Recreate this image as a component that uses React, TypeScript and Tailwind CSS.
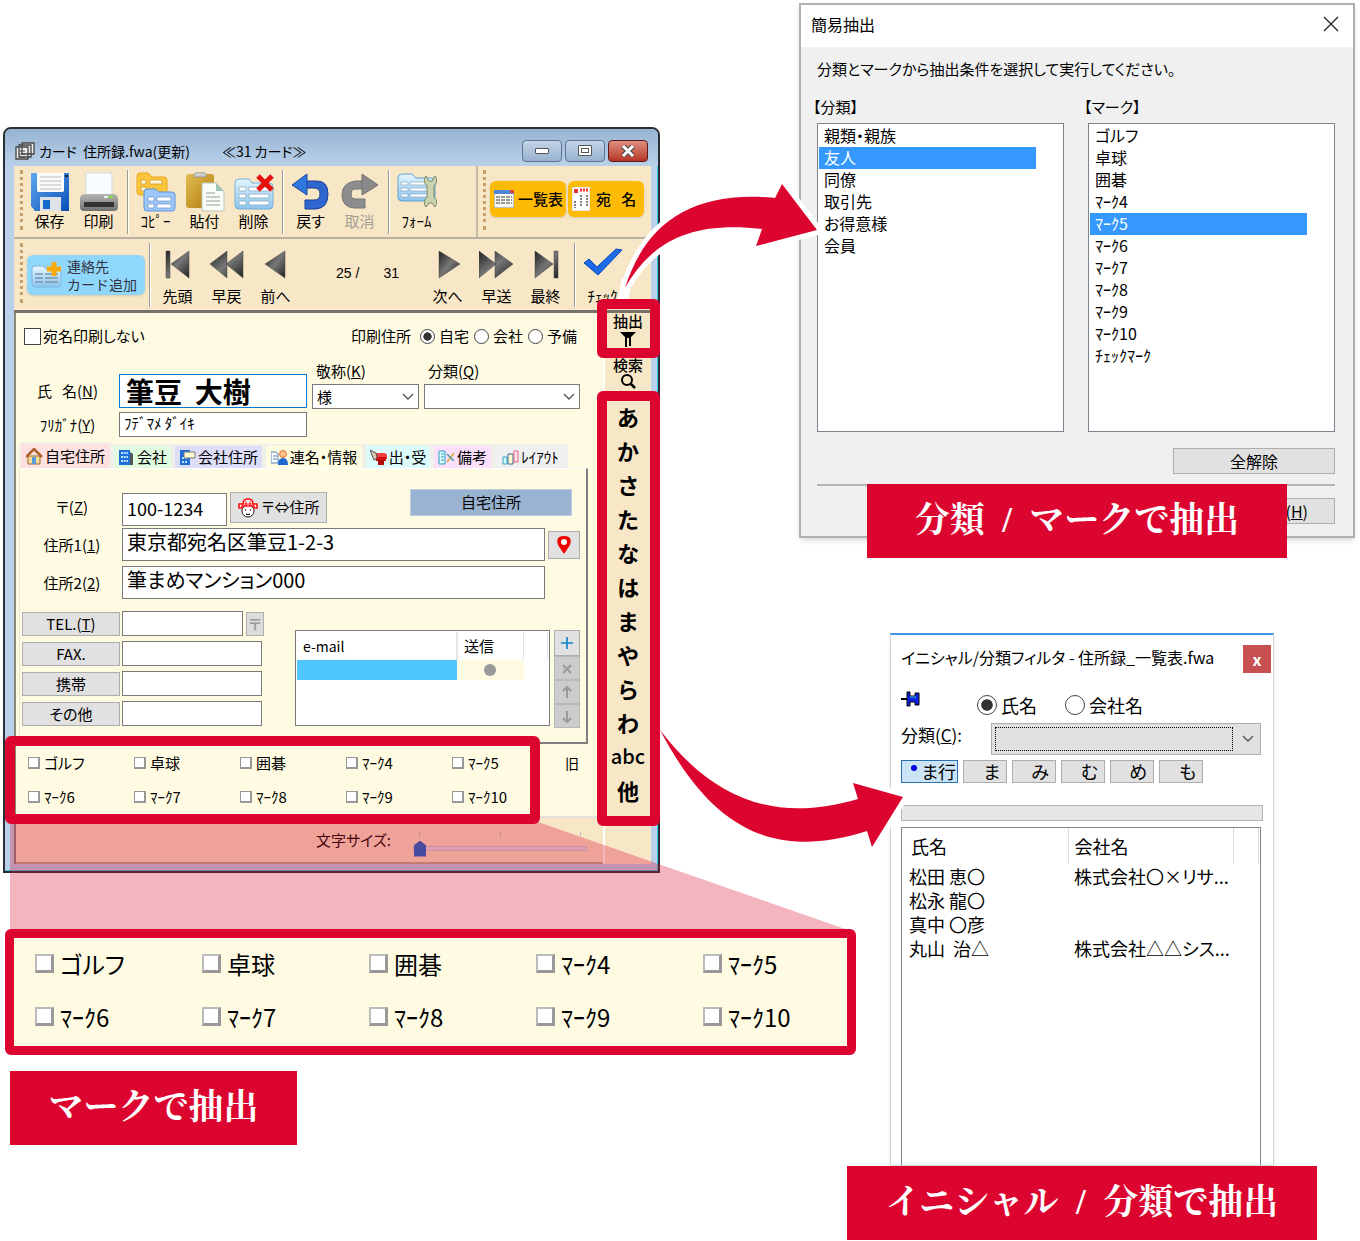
import { useState } from 'react'
import type { ReactNode } from 'react'

const marks = ['ゴルフ', '卓球', '囲碁', 'ﾏｰｸ4', 'ﾏｰｸ5', 'ﾏｰｸ6', 'ﾏｰｸ7', 'ﾏｰｸ8', 'ﾏｰｸ9', 'ﾏｰｸ10']
const groups = ['親類・親族', '友人', '同僚', '取引先', 'お得意様', '会員']
const initials = ['あ', 'か', 'さ', 'た', 'な', 'は', 'ま', 'や', 'ら', 'わ', 'abc', '他']
const people = [
  { name: '松田 恵〇', company: '株式会社〇×リサ...' },
  { name: '松永 龍〇', company: '' },
  { name: '真中 〇彦', company: '' },
  { name: '丸山  治△', company: '株式会社△△シス...' },
]

// ---------- Icons ----------

function Svg({ children, className = 'h-10 w-10', box = '0 0 40 40' }: { children: ReactNode; className?: string; box?: string }) {
  return (
    <svg viewBox={box} className={`shrink-0 ${className}`} fill="none" aria-hidden="true">
      {children}
    </svg>
  )
}

// Shared gradients for the toolbar icons
function Gradients() {
  return (
    <svg width="0" height="0" className="absolute" aria-hidden="true">
      <defs>
        <linearGradient id="blue" x1="0" y1="0" x2="1" y2="1">
          <stop offset="0" stopColor="#5fa8f0" />
          <stop offset="1" stopColor="#0a4fb8" />
        </linearGradient>
        <linearGradient id="sky" x1="0" y1="0" x2="0" y2="1">
          <stop offset="0" stopColor="#e6f6ff" />
          <stop offset="1" stopColor="#8cc4ee" />
        </linearGradient>
        <linearGradient id="gold" x1="0" y1="0" x2="1" y2="1">
          <stop offset="0" stopColor="#e2bd55" />
          <stop offset="1" stopColor="#b07a08" />
        </linearGradient>
        <linearGradient id="gray" x1="0" y1="0" x2="0" y2="1">
          <stop offset="0" stopColor="#b5b5b5" />
          <stop offset="1" stopColor="#6f6f6f" />
        </linearGradient>
        <linearGradient id="dark" x1="0" y1="0" x2="1" y2="1">
          <stop offset="0" stopColor="#222" />
          <stop offset="0.5" stopColor="#777" />
          <stop offset="1" stopColor="#222" />
        </linearGradient>
      </defs>
    </svg>
  )
}

const SaveIcon = () => (
  <Svg>
    <path d="M1 1h38v38H5l-4-5z" fill="url(#blue)" />
    <path d="M7 1h27v18a2 2 0 0 1-2 1H9a2 2 0 0 1-2-1z" fill="#fafafa" />
    <path d="M10 5h21M10 9h21M10 13h21M10 17h21" stroke="#bbb" />
    <path d="M10 25h21v14H10z" fill="#dfe3e8" />
    <path d="M13 28h7v9h-7z" fill="#1668cc" />
    <path d="M35 3h3v2h-3z" fill="#123" />
  </Svg>
)
const PrintIcon = () => (
  <Svg>
    <path d="M7 1h26v22H7z" fill="#f8feff" stroke="#cfdde2" />
    <path d="M1 27q0-5 5-5h28q5 0 5 5v8q0 4-4 4H5q-4 0-4-4z" fill="url(#gray)" />
    <path d="M5 30h30v5H5z" fill="#333" />
    <path d="M25 24h4v2h-4z" fill="#eee" />
    <path d="M30 24h4v2h-4z" fill="#7be02c" />
  </Svg>
)
const CopyIcon = () => (
  <Svg>
    <path d="M1 4q0-3 3-3h8l4 4h12q3 0 3 3v15H4q-3 0-3-3z" fill="#fcc53c" stroke="#e8a51c" />
    <path d="M5 8h5v4H5zM14 8h12v4H14zM5 15h5v4H5z" fill="#fff6d8" stroke="#c9922a" strokeWidth=".7" />
    <path d="M8 20q0-3 3-3h8l4 3h13q3 0 3 3v13q0 3-3 3H11q-3 0-3-3z" fill="#9cc8fb" stroke="#5c93dd" />
    <path d="M12 25h6v4h-6zM21 25h14v4H21zM12 32h6v4h-6zM21 32h14v4H21z" fill="#fff" stroke="#6e93c4" strokeWidth=".7" />
  </Svg>
)
const PasteIcon = () => (
  <Svg>
    <rect x="1" y="2" width="28" height="34" rx="3" fill="url(#gold)" />
    <path d="M9 3q0-3 6-3t6 3v2H9z" fill="#ccc" stroke="#888" strokeWidth=".7" />
    <path d="M17 11h14l8 9v19H17z" fill="#f8fdf8" stroke="#b9c5bd" />
    <path d="M31 11v8h8z" fill="#9fc2b4" />
    <path d="M21 21h9M21 25h14M21 29h14M21 33h14" stroke="#9a9a9a" />
  </Svg>
)
const DeleteIcon = () => (
  <Svg>
    <path d="M1 11q0-4 4-4h10l3 4h17q4 0 4 4v18q0 4-4 4H5q-4 0-4-4z" fill="url(#sky)" stroke="#74acd8" />
    <path d="M5 15h7v4H5zM15 15h20v4H15zM5 22h7v4H5zM15 22h20v4H15zM5 29h7v4H5zM15 29h20v4H15z" fill="#fff" stroke="#87a9c2" strokeWidth=".8" />
    <path d="M24 4l14 14M38 4L24 18" stroke="#e8100c" strokeWidth="5" />
  </Svg>
)
const UndoIcon = () => (
  <Svg>
    <path d="M15 9v7h8q6 0 6 6t-6 6h-9v9h11q12-1 12-15T24 9z" fill="#2f66cf" stroke="#1a3f94" />
    <path d="M16 2v21L1 13z" fill="#2f78df" stroke="#1c449c" />
  </Svg>
)
const RedoIcon = () => (
  <Svg>
    <path d="M24 9v8h-8q-5 0-5 5t5 5h9v9H14Q2 35 2 23T15 9z" fill="#8d8d8d" stroke="#777" />
    <path d="M22 2v21l16-10z" fill="#8a8a8a" stroke="#6e6e6e" />
  </Svg>
)
const FormIcon = () => (
  <Svg>
    <path d="M1 6q0-4 4-4h10l4 4h16q3 0 3 3v16q0 4-4 4H5q-4 0-4-4z" fill="url(#sky)" stroke="#5d9fd4" />
    <path d="M4 10h7v3H4zM13 10h18v3H13zM4 16h7v3H4zM13 16h18v3H13zM4 22h7v3H4zM13 22h18v3H13z" fill="#fff" stroke="#7fa7c8" strokeWidth=".7" />
    <path d="M29 4q-4 5 1 10v11q-5 5-1 10l3-4h3l3 4q4-5-1-10V14q5-5 1-10l-3 5h-3z" fill="#c9d3ae" stroke="#7a8867" />
  </Svg>
)

const navShapes: Record<string, string> = {
  first: 'M3 2h4v27H3zM26 2v27L8 15z',
  prev: 'M18 2v27L1 15zM34 2v27L17 15z',
  back: 'M24 2v27L4 15z',
  next: 'M6 2v27l21-14z',
  fast: 'M0 2v27l17-14zM16 2v27l18-14z',
  last: 'M4 2v27l18-14zM23 2h4v27h-4z',
}
const NavIcon = ({ shape }: { shape: string }) => (
  <Svg className={shape === 'prev' || shape === 'fast' ? 'mb-1.5 h-8 w-9' : 'mb-1.5 h-8 w-8'} box={shape === 'prev' || shape === 'fast' ? '0 0 36 32' : '-1 0 32 32'}>
    <path d={navShapes[shape]} fill="url(#dark)" stroke="#444" strokeWidth=".5" />
  </Svg>
)
const CheckIcon = () => (
  <Svg className="mb-1 h-10 w-10">
    <path d="M1 20l5-4 8 8L33 6l6 1-24 25z" fill="#1f6ae6" stroke="#0a4bc0" />
  </Svg>
)
const ChevronIcon = ({ className }: { className: string }) => (
  <Svg className={`pointer-events-none ${className}`} box="0 0 14 8">
    <path d="M2 1l5 5 5-5" stroke="#555" strokeWidth="1.4" />
  </Svg>
)

// ---------- Card window ----------

function Tool({ label, icon, disabled = false }: { label: string; icon: ReactNode; disabled?: boolean }) {
  return (
    <button className={`flex w-[49px] shrink-0 flex-col items-center whitespace-nowrap text-[15px] leading-[18px] ${disabled ? 'text-[#a5a196]' : 'text-black'}`}>
      {icon}
      <span>{label}</span>
    </button>
  )
}

const Divider = () => <div className="ml-1 mr-0.5 h-16 w-0.5 shrink-0 border-l border-r border-l-[#999] border-r-white" />
const Grip = () => <div className="h-[60px] w-0 shrink-0 border-l-[3px] border-dotted border-[#c69f6f]" />

function MainToolbar() {
  return (
    <div className="flex h-[73px] border-b-2 border-[#b9b2a4]">
      <div className="flex flex-1 items-start border-r-2 border-[#c5bcaa] pl-1.5 pt-1">
        <Grip />
        <div className="flex pl-0.5 pt-0.5">
          <Tool label="保存" icon={<SaveIcon />} />
          <Tool label="印刷" icon={<PrintIcon />} />
        </div>
        <Divider />
        <div className="flex pt-0.5">
          <Tool label="ｺﾋﾟｰ" icon={<CopyIcon />} />
          <Tool label="貼付" icon={<PasteIcon />} />
          <Tool label="削除" icon={<DeleteIcon />} />
        </div>
        <Divider />
        <div className="flex pt-0.5">
          <Tool label="戻す" icon={<UndoIcon />} />
          <Tool label="取消" icon={<RedoIcon />} disabled />
        </div>
        <Divider />
        <div className="flex pt-0.5">
          <Tool label="ﾌｫｰﾑ" icon={<FormIcon />} />
        </div>
      </div>
      <div className="flex w-[173px] items-start gap-0.5 pl-[5px] pt-1">
        <Grip />
        <button className="ml-0.5 mt-[11px] flex h-9 w-[76px] items-center gap-1 rounded-md bg-[#fdbb05] pl-1 text-[15px] font-medium shadow-sm">
          <Svg className="h-[18px] w-5" box="0 0 20 18">
            <path d="M0 0h20v18H0z" fill="#f8f8ef" stroke="#888" />
            <path d="M0 0h20v4H0z" fill="#4e86d8" />
            <path d="M16 0h4v3h-4z" fill="#e4432c" />
            <path d="M2 7h16M2 10h16M2 13h16" stroke="#999" strokeWidth="2" strokeDasharray="4 1" />
          </Svg>
          一覧表
        </button>
        <button className="mt-[11px] flex h-9 w-[76px] items-center gap-1.5 rounded-md bg-[#fdbb05] pl-1 text-[15px] font-medium shadow-sm">
          <Svg className="h-6 w-[18px]" box="0 0 18 24">
            <path d="M0 0h18v24H0z" fill="#fff" stroke="#ccc" />
            <path d="M2 2h4v4H2z" fill="#e33" />
            <path d="M8 3h8" stroke="#e33" strokeWidth="3" strokeDasharray="2 1" />
            <path d="M15 8v12M9 8v12M3 14v7" stroke="#555" strokeWidth="1.5" strokeDasharray="2 1" />
          </Svg>
          宛&nbsp;&nbsp; 名
        </button>
      </div>
    </div>
  )
}

function NavToolbar() {
  return (
    <div className="flex h-[74px] items-start border-b-[3px] border-[#77736a] pl-1.5 pt-1">
      <Grip />
      <button className="ml-1 mt-3 flex h-10 w-[118px] shrink-0 items-center gap-1 rounded-md bg-[#8fd8fb] pl-1 text-left text-sm text-[#334] shadow-sm [font-feature-settings:normal]">
        <Svg className="h-8 w-8" box="0 0 32 32">
          <path d="M1 10q0-3 3-3h8l3 3h13q2 0 2 3v12q0 3-3 3H4q-3 0-3-3z" fill="url(#sky)" stroke="#7eb3e0" />
          <path d="M4 15h8M14 15h13M4 19h8M14 19h13M4 23h8M14 23h13" stroke="#7795ad" strokeWidth="1.5" />
          <path d="M23 3v14M16 10h14" stroke="#f7a90e" strokeWidth="5" />
        </Svg>
        <span className="flex flex-col whitespace-nowrap leading-[18px]">
          <span>連絡先</span>
          <span>カード追加</span>
        </span>
      </button>
      <Divider />
      <div className="flex pt-1.5">
        <Tool label="先頭" icon={<NavIcon shape="first" />} />
        <Tool label="早戻" icon={<NavIcon shape="prev" />} />
        <Tool label="前へ" icon={<NavIcon shape="back" />} />
      </div>
      <div className="flex flex-1 justify-center gap-6 pl-3 pt-5 font-['Liberation_Sans'] text-sm leading-5">
        <span>25 /</span>
        <span>31</span>
      </div>
      <div className="flex pt-1.5">
        <Tool label="次へ" icon={<NavIcon shape="next" />} />
        <Tool label="早送" icon={<NavIcon shape="fast" />} />
        <Tool label="最終" icon={<NavIcon shape="last" />} />
      </div>
      <Divider />
      <div className="mr-6 flex">
        <Tool label="ﾁｪｯｸ" icon={<CheckIcon />} />
      </div>
    </div>
  )
}

function Radio({ name, label, checked = false, big = false }: { name: string; label: string; checked?: boolean; big?: boolean }) {
  return (
    <label className="flex items-center gap-1 whitespace-nowrap">
      <input
        type="radio"
        name={name}
        defaultChecked={checked}
        className={`appearance-none rounded-full border border-[#444] bg-white checked:bg-[radial-gradient(circle,#333_42%,white_48%)] ${big ? 'h-5 w-5' : 'h-[15px] w-[15px]'}`}
      />
      {label}
    </label>
  )
}

const field = 'border border-[#7a7a7a] bg-white px-1 outline-none'
const plainButton = 'border border-[#adadad] bg-[#e1e1e1]'

const tabs = [
  { label: '自宅住所', tone: 'bg-[#fde0e0]', width: 'w-[93px]', icon: <><path d="M2 8h12v8H2z" fill="#f7dc9c" stroke="#963" /><path d="M0 9l8-8 8 8" stroke="#b0602a" strokeWidth="2.5" /><path d="M6 9h4v7H6z" fill="#5b9bd5" /></> },
  { label: '会社', tone: 'bg-[#e0fbe0]', width: 'w-[61px]', icon: <><path d="M1 1h11v15H1z" fill="#1f6fd8" /><path d="M12 3l3 2v11h-3z" fill="#555" /><path d="M3 4h7M3 8h7M3 12h7" stroke="#bfe2ff" strokeWidth="2" strokeDasharray="2 .7" /></> },
  { label: '会社住所', tone: 'bg-[#dedefb]', width: 'w-[91px]', icon: <><path d="M1 1h10v15H1z" fill="#1f6fd8" /><path d="M3 9h6M3 13h6" stroke="#bfe2ff" strokeWidth="2" strokeDasharray="2 1" /><path d="M5 3h11v6H5z" fill="#fffbd0" stroke="#777" /></> },
  { label: '連名・情報', tone: 'bg-[#fffde0]', width: 'w-[100px]', icon: <><path d="M0 3h5l2 2v9H0z" fill="#fff" stroke="#557ec0" /><path d="M2 7h4M2 10h4" stroke="#557ec0" /><circle cx="12" cy="5" r="3.5" fill="#fcc08a" stroke="#e5702a" /><path d="M7 16q0-7 5-7t5 7z" fill="#1e6ad0" /></> },
  { label: '出・受', tone: 'bg-[#dcfbfb]', width: 'w-[68px]', icon: <><path d="M4 4h10q3 0 3 3v3H7z" fill="#f04040" /><path d="M5 8h11v4H6z" fill="#d01010" /><path d="M8 11h6v5H8z" fill="#b00c0c" /><path d="M0 1l6 3 1 5-3 2z" fill="#d8c9a8" stroke="#555" /></> },
  { label: '備考', tone: 'bg-[#fbdffb]', width: 'w-[61px]', icon: <><path d="M1 2h6v13H1z" fill="#dff" stroke="#2b9bbd" /><path d="M3 5h3M3 8h3M3 11h3" stroke="#2b9bbd" /><path d="M9 13l7-9" stroke="#d9a838" strokeWidth="1.5" /><path d="M9 5l7 7" stroke="#4a9a9a" strokeWidth="1.5" /></> },
  { label: 'ﾚｲｱｳﾄ', tone: 'bg-[#f0f0f0]', width: 'w-[75px]', icon: <><path d="M1 8h4v7H1z" fill="#cff" stroke="#3a9fc4" /><path d="M6 5h5v10H6z" fill="#fffbd0" stroke="#36689c" /><path d="M12 2h4v11h-4z" fill="#ffe3ea" stroke="#e0627f" /></> },
]

function Tabs() {
  const [active, setActive] = useState(0)
  return (
    <div className="ml-[3px] mt-1 flex h-[26px] items-end" role="tablist">
      {tabs.map((tab, i) => (
        <button
          key={tab.label}
          role="tab"
          aria-selected={active === i}
          onClick={() => setActive(i)}
          className={`flex items-center justify-center gap-0.5 whitespace-nowrap border-2 border-b-0 border-[#f0efe8] text-[15px] leading-5 ${tab.width} ${tab.tone} ${active === i ? 'h-[26px]' : 'h-6'}`}
        >
          <Svg className="h-[17px] w-[17px]" box="0 0 17 17">{tab.icon}</Svg>
          {tab.label}
        </button>
      ))}
    </div>
  )
}

const contacts = [
  { id: 'tel', label: <>TEL.(<u>T</u>)</> },
  { id: 'fax', label: 'FAX.' },
  { id: 'mobile', label: '携帯' },
  { id: 'other', label: 'その他' },
]

const rowActions = [
  { label: '削除', path: 'M1 3l8 8M9 3l-8 8' },
  { label: '上へ', path: 'M5 1v11M1 5l4-4 4 4' },
  { label: '下へ', path: 'M5 1v11M1 8l4 4 4-4' },
]

function HomePanel() {
  return (
    <div className="ml-[3px] mr-[15px] border-b-2 border-l border-r-2 border-t border-b-[#808080] border-l-[#e6e3d8] border-r-[#808080] border-t-white pb-3.5 pl-0.5 pr-1.5 pt-5">
      <div className="flex items-start">
        <label htmlFor="zip" className="mt-1.5 w-[100px] text-center text-[15px] leading-6">〒(<u>Z</u>)</label>
        <input id="zip" defaultValue="100-1234" className={`mt-1 h-[33px] w-[105px] pb-1 text-lg ${field}`} />
        <button className={`ml-[3px] mt-[3px] flex h-[31px] w-[97px] items-center justify-center gap-1 whitespace-nowrap text-[15px] ${plainButton}`}>
          <Svg className="h-5 w-5" box="0 0 20 20">
            <circle cx="10" cy="13" r="6" fill="#fff" stroke="#222" />
            <path d="M1 10V6h4q0-5 5-5t5 5h4v4h-3V8H4v2z" fill="#fff" stroke="#f11" strokeWidth="1.6" />
            <path d="M8 3v5M12 3v5M4 6h12" stroke="#f11" />
            <path d="M7 12h1M12 12h1M8 16q2 1 4 0" stroke="#222" strokeWidth="1.3" />
          </Svg>
          〒⇔住所
        </button>
        <div className="ml-auto mr-2 h-[27px] w-[162px] border border-[#c0cddd] bg-[#99b3d1] text-center text-[15px] leading-6">自宅住所</div>
      </div>
      <div className="mt-0.5 flex items-center">
        <label htmlFor="address1" className="w-[100px] text-center text-[15px] leading-6">住所1(<u>1</u>)</label>
        <input id="address1" defaultValue="東京都宛名区筆豆1-2-3" className={`h-[33px] min-w-0 flex-1 pb-1.5 text-xl ${field}`} />
        <button className={`ml-[3px] flex h-7 w-8 items-center justify-center ${plainButton}`} aria-label="地図">
          <Svg className="h-5 w-4" box="0 0 16 20">
            <path d="M8 19L2 10q-3-9 6-9t6 9z" fill="#f00000" />
            <circle cx="8" cy="7" r="3" fill="#fff" />
          </Svg>
        </button>
      </div>
      <div className="mr-[35px] mt-[5px] flex items-center">
        <label htmlFor="address2" className="w-[100px] text-center text-[15px] leading-6">住所2(<u>2</u>)</label>
        <input id="address2" defaultValue="筆まめマンション000" className={`h-[33px] min-w-0 flex-1 pb-1.5 text-xl ${field}`} />
      </div>
      <div className="mt-3 flex items-start">
        <div className="flex flex-col gap-[5px]">
          {contacts.map(c => (
            <div key={c.id} className="flex items-center gap-0.5">
              <button id={`${c.id}-label`} className={`h-6 w-[98px] text-[15px] leading-5 ${plainButton}`}>{c.label}</button>
              <input aria-labelledby={`${c.id}-label`} className={`h-[25px] ${c.id === 'tel' ? 'w-[121px]' : 'w-[140px]'} ${field}`} />
              {c.id === 'tel' && (
                <button className="ml-px h-6 w-[18px] border border-[#b0b0b0] bg-[#dcdcdc] text-[15px] font-bold leading-5 text-[#999]">〒</button>
              )}
            </div>
          ))}
        </div>
        <div className="ml-auto mt-[19px] h-24 w-[255px] border border-[#7a7a7a] bg-white p-px">
          <table className="text-[15px] leading-7">
            <thead>
              <tr className="text-left">
                <th className="w-[161px] border-r-2 border-[#e5e5e5] pl-1.5 text-sm font-normal leading-7">e-mail</th>
                <th className="w-[67px] border-r border-[#e5e5e5] pl-1.5 font-normal">送信</th>
                <th className="w-6 border-r border-[#e5e5e5]" />
              </tr>
            </thead>
            <tbody>
              <tr className="h-5">
                <td className="bg-[#50c6fe]" />
                <td className="bg-[#fffae2]"><div className="mx-auto h-3 w-3 rounded-full bg-[#999]" /></td>
                <td />
              </tr>
            </tbody>
          </table>
        </div>
        <div className="ml-1 mt-[19px] flex w-[26px] flex-col">
          <button aria-label="追加" className={`flex h-[26px] items-center justify-center ${plainButton}`}>
            <Svg className="h-3 w-3" box="0 0 12 12"><path d="M6 0v12M0 6h12" stroke="#0a84c8" strokeWidth="1.6" /></Svg>
          </button>
          {rowActions.map(action => (
            <button key={action.label} aria-label={action.label} className="flex h-6 items-center justify-center border border-[#b9b9b9] bg-[#ccc]">
              <Svg className="h-[13px] w-2.5" box="0 0 10 13"><path d={action.path} stroke="#999" strokeWidth="2" /></Svg>
            </button>
          ))}
        </div>
      </div>
    </div>
  )
}

function Combo({ id, label, value, width }: { id: string; label: ReactNode; value: string; width: string }) {
  return (
    <div className={width}>
      <label htmlFor={id} className="ml-1 block text-[15px] leading-[18px]">{label}</label>
      <div className="mt-1 grid items-center">
        <select id={id} className={`col-start-1 row-start-1 h-[25px] w-full appearance-none text-[15px] leading-5 ${field}`}>
          <option>{value}</option>
        </select>
        <ChevronIcon className="col-start-1 row-start-1 mr-1 h-2 w-3.5 justify-self-end" />
      </div>
    </div>
  )
}

function CardForm() {
  return (
    <div className="bg-[#fffae2]">
      <div className="flex h-[34px] items-center pl-2 pr-[26px] pt-3 text-[15px] leading-5">
        <label className="flex items-center gap-0.5">
          <input type="checkbox" className="h-[17px] w-[17px] appearance-none border border-[#444] bg-white" />
          宛名印刷しない
        </label>
        <div className="ml-auto flex items-center gap-[5px]">
          <span className="mr-1">印刷住所</span>
          <Radio name="print-address" label="自宅" checked />
          <Radio name="print-address" label="会社" />
          <Radio name="print-address" label="予備" />
        </div>
      </div>
      <div className="mt-[15px] flex items-start text-[15px]">
        <div className="flex w-[103px] flex-col pt-4 text-center">
          <label htmlFor="name" className="leading-[26px]">氏&nbsp;&nbsp; 名(<u>N</u>)</label>
          <label htmlFor="kana" className="mt-2 leading-[26px]">ﾌﾘｶﾞﾅ(<u>Y</u>)</label>
        </div>
        <div className="flex flex-col gap-1 pt-3">
          <input id="name" defaultValue="筆豆  大樹" className="h-[34px] w-[188px] border border-[#0078d7] bg-white px-1.5 text-[28px] font-bold leading-7 outline-none" />
          <input id="kana" defaultValue="ﾌﾃﾞﾏﾒ ﾀﾞｲｷ" className={`h-[25px] w-[188px] pb-1 text-[15px] ${field}`} />
        </div>
        <div className="ml-[5px] flex gap-[5px]">
          <Combo id="title" label={<>敬称(<u>K</u>)</>} value="様" width="w-[107px]" />
          <Combo id="group" label={<>分類(<u>Q</u>)</>} value="" width="w-[156px]" />
        </div>
      </div>
      <Tabs />
      <HomePanel />
      <div className="flex justify-between pb-2 pl-3 pr-6 pt-2">
        <div className="grid w-[530px] grid-cols-5 gap-y-3">
          {marks.map(mark => <MarkCheck key={mark} label={mark} />)}
        </div>
        <span className="text-sm leading-[22px]">旧</span>
      </div>
    </div>
  )
}

function MarkCheck({ label, large = false }: { label: string; large?: boolean }) {
  return (
    <label className={`flex items-center whitespace-nowrap ${large ? 'gap-1.5 text-2xl leading-7' : 'gap-1 text-[15px] leading-[22px]'}`}>
      <input
        type="checkbox"
        className={`appearance-none border-[#999] bg-white ${large ? 'h-[19px] w-[19px] border-2 border-b-[3px] border-r-[3px] border-l-[#bbb] border-t-[#bbb]' : 'h-3 w-3 border border-b-2 border-r-2'}`}
      />
      {label}
    </label>
  )
}

function SideIndex() {
  return (
    <div className="flex w-[46px] shrink-0 flex-col bg-[#f8e7c6] text-[15px] font-medium">
      <button className="flex h-11 flex-col items-center gap-0.5 leading-4">
        抽出
        <Svg className="h-4 w-4" box="0 0 16 16">
          <path d="M0 1h16l-5 5v9H9V7H7v9H5V6z" fill="#000" />
        </Svg>
      </button>
      <button className="flex h-[42px] flex-col items-center leading-4">
        検索
        <Svg className="h-4 w-4" box="0 0 16 16">
          <circle cx="7" cy="7" r="5" stroke="#000" strokeWidth="2" />
          <path d="M10 10l5 5" stroke="#000" strokeWidth="2.5" />
        </Svg>
      </button>
      {initials.map(initial => (
        <button key={initial} className={`h-[34px] leading-[34px] ${initial === 'abc' ? 'text-xl' : 'text-[22px] font-bold'}`}>{initial}</button>
      ))}
    </div>
  )
}

function FontSizeBar() {
  return (
    <div className="flex h-12 items-start justify-end border-b-2 border-t-2 border-b-[#b9ac90] border-t-[#e3e0dc] pr-4 pt-2.5 text-[15px] leading-6">
      <label htmlFor="font-size">文字サイズ:</label>
      <div className="ml-[22px] mt-1 w-[174px]">
        <div className="flex justify-between px-1.5">
          <span className="h-1 w-px bg-[#b5bdcc]" />
          <span className="h-1 w-px bg-[#b5bdcc]" />
          <span className="h-1 w-px bg-[#b5bdcc]" />
        </div>
        <input
          id="font-size"
          type="range"
          min={0}
          max={2}
          defaultValue={0}
          className="mt-2.5 block h-[5px] w-full appearance-none border border-[#c5cbd8] bg-[#e4e4ec] [&::-webkit-slider-thumb]:h-4 [&::-webkit-slider-thumb]:w-3 [&::-webkit-slider-thumb]:appearance-none [&::-webkit-slider-thumb]:bg-[#0a6ad0] [&::-webkit-slider-thumb]:[clip-path:polygon(50%_0,100%_30%,100%_100%,0_100%,0_30%)]"
        />
      </div>
    </div>
  )
}

function CardWindow() {
  return (
    <section className="w-[657px] rounded-t-lg border-2 border-[#2a2f35] bg-[#b9d1ea] pb-[7px] pl-[9px] pr-[7px] shadow-[inset_-1px_-1px_0_#35c5e8]">
      <header className="-ml-[9px] -mr-[7px] flex h-[37px] items-center rounded-t-md bg-linear-to-b from-[#98b3d2] to-[#b9d1ea] pl-2.5 pr-2.5 pt-1.5">
        <Svg className="h-[18px] w-5" box="0 0 20 18">
          <path d="M7 1h12v11H7zM4 3h12v12H4zM1 5h12v12H1z" fill="#eee" stroke="#444" strokeWidth="1.3" />
          <path d="M4 9h6M4 12h6M4 15h6" stroke="#444" />
        </Svg>
        <h1 className="ml-1 whitespace-pre text-sm leading-5">カード  住所録.fwa(更新)</h1>
        <span className="ml-8 whitespace-nowrap text-sm leading-5">≪31 カード≫</span>
        <div className="ml-auto flex gap-[3px]">
          <button aria-label="最小化" className="flex h-[22px] w-10 items-center justify-center rounded-sm border border-[#5d7390] bg-linear-to-b from-[#c3d4e8] to-[#98b1cd]">
            <span className="h-1.5 w-3.5 rounded-[1px] border border-[#555] bg-white" />
          </button>
          <button aria-label="最大化" className="flex h-[22px] w-10 items-center justify-center rounded-sm border border-[#5d7390] bg-linear-to-b from-[#c3d4e8] to-[#98b1cd]">
            <span className="flex h-[11px] w-3.5 items-center justify-center rounded-[1px] border border-[#555] bg-white">
              <span className="h-[5px] w-2 border border-[#555]" />
            </span>
          </button>
          <button aria-label="閉じる" className="flex h-[22px] w-10 items-center justify-center rounded-sm border border-[#5c1a1a] bg-linear-to-b from-[#dd8d80] to-[#b73426]">
            <Svg className="h-3 w-3.5" box="0 0 14 12">
              <path d="M2 1l10 10M12 1L2 11" stroke="#444" strokeWidth="5" />
              <path d="M2 1l10 10M12 1L2 11" stroke="#fff" strokeWidth="3" />
            </Svg>
          </button>
        </div>
      </header>
      <div className="bg-[#f8e7c6]">
        <MainToolbar />
        <NavToolbar />
        <div className="flex">
          <div className="min-w-0 flex-1 border-l-2 border-r-2 border-l-[#8a8678] border-r-white">
            <CardForm />
            <FontSizeBar />
          </div>
          <SideIndex />
        </div>
      </div>
    </section>
  )
}

// ---------- Extraction dialog ----------

function ListBox({ title, items, selected, onSelect }: { title: string; items: string[]; selected: number; onSelect: (i: number) => void }) {
  return (
    <div className="w-[247px]">
      <h3 className="-ml-1 text-[15px] leading-5">{title}</h3>
      <ul className="mt-1.5 h-[309px] border border-[#7f858e] bg-white p-px text-base leading-5">
        {items.map((item, i) => (
          <li key={item}>
            <button
              onClick={() => onSelect(i)}
              className={`block h-[22px] w-[217px] pb-0.5 pl-[5px] text-left ${i === selected ? 'bg-[#3598fe] text-white' : ''}`}
            >
              {item}
            </button>
          </li>
        ))}
      </ul>
    </div>
  )
}

function ExtractDialog() {
  const [group, setGroup] = useState(1)
  const [mark, setMark] = useState(4)
  return (
    <section className="mr-[5px] border-2 border-[#b0b0b0] bg-[#f0f0f0] shadow-md">
      <header className="flex h-[42px] items-center justify-between bg-white pb-1 pl-2.5 pr-3.5">
        <h2 className="text-base">簡易抽出</h2>
        <button aria-label="閉じる">
          <Svg className="h-4 w-4" box="0 0 16 16"><path d="M1 1l14 14M15 1L1 15" stroke="#222" strokeWidth="1.3" /></Svg>
        </button>
      </header>
      <div className="pb-3 pl-4 pr-[18px] pt-2.5">
        <p className="text-[15px] leading-6">分類とマークから抽出条件を選択して実行してください。</p>
        <div className="mt-4 flex justify-between">
          <ListBox title="【分類】" items={groups} selected={group} onSelect={setGroup} />
          <ListBox title="【マーク】" items={[...marks, 'ﾁｪｯｸﾏｰｸ']} selected={mark} onSelect={setMark} />
        </div>
        <div className="mt-4 flex justify-end">
          <button className={`h-[26px] w-[162px] text-base leading-5 ${plainButton}`}>全解除</button>
        </div>
        <hr className="mt-2.5 border-t-2 border-[#b5b5b5]" />
        <div className="mt-3 flex justify-end">
          <button className={`h-[26px] w-[120px] pr-[26px] text-right text-base leading-5 ${plainButton}`}>(<u>H</u>)</button>
        </div>
      </div>
    </section>
  )
}

// ---------- Initial / group filter window ----------

function FilterWindow() {
  const [row, setRow] = useState('ま行')
  return (
    <section className="ml-[91px] mr-[86px] flex h-[533px] flex-col border border-t-2 border-[#d5d5d5] border-t-[#3f97e0] bg-white px-2.5 shadow-md">
      <header className="-mr-2 flex items-start justify-between pt-2.5">
        <h2 className="whitespace-nowrap text-base leading-6">イニシャル/分類フィルタ - 住所録_一覧表.fwa</h2>
        <button className="h-7 w-7 bg-[#c75050] text-base font-bold leading-6 text-white">x</button>
      </header>
      <div className="mt-5 flex h-6 items-center text-lg">
        <Svg className="-mt-3 h-4 w-5" box="0 0 20 16">
          <path d="M0 8h7" stroke="#000" strokeWidth="2" />
          <path d="M6 1h3v4h5V2h4v12h-4v-3H9v4H6z" fill="#1020e0" stroke="#000" />
          <path d="M9 6h6" stroke="#3cc" />
        </Svg>
        <div className="ml-14 flex gap-7">
          <Radio name="filter-by" label="氏名" checked big />
          <Radio name="filter-by" label="会社名" big />
        </div>
      </div>
      <div className="mt-1.5 flex items-start">
        <label htmlFor="filter-group" className="w-[90px] text-[17px] leading-6">分類(<u>C</u>):</label>
        <div className="grid flex-1 items-center pr-0.5">
          <select id="filter-group" className={`col-start-1 row-start-1 h-8 w-full appearance-none outline-none ${plainButton}`}>
            <option></option>
          </select>
          <div className="pointer-events-none col-start-1 row-start-1 ml-1 mr-7 h-6 border border-dotted border-black" />
          <ChevronIcon className="col-start-1 row-start-1 mr-1.5 h-2 w-3.5 justify-self-end" />
        </div>
      </div>
      <div className="mt-[5px] flex gap-[5px] text-lg leading-4">
        {['ま行', 'ま', 'み', 'む', 'め', 'も'].map(kana => (
          <button
            key={kana}
            onClick={() => setRow(kana)}
            className={`flex h-[23px] justify-end whitespace-nowrap border pt-0.5 ${row === kana ? 'border-[#2a70b0] bg-[#cce4f8]' : 'border-[#adadad] bg-[#e1e1e1]'} ${kana === 'ま行' ? 'w-[57px] pr-px' : 'w-11 pr-1.5'}`}
          >
            {kana === 'ま行' && <span className="mr-1 mt-0.5 h-1.5 w-1.5 shrink-0 rounded-full bg-[#0000e0]" />}
            {kana}
          </button>
        ))}
      </div>
      <div className="mt-[22px] h-4 border border-[#b5b5b5] bg-[#e6e6e6]" />
      <div className="mr-0.5 mt-1.5 flex-1 border border-b-0 border-[#7f858e] px-px">
        <table className="w-full text-left text-lg leading-6">
          <thead>
            <tr className="h-9">
              <th className="w-[165px] border-r border-[#ddd] pl-2 font-normal">氏名</th>
              <th className="w-[165px] border-r border-[#ddd] pl-1.5 font-normal">会社名</th>
              <th className="border-r border-[#ddd]" />
            </tr>
          </thead>
          <tbody>
            {people.map(p => (
              <tr key={p.name} className="h-6">
                <td className="whitespace-pre pl-1.5">{p.name}</td>
                <td className="whitespace-nowrap pl-1.5">{p.company}</td>
                <td />
              </tr>
            ))}
          </tbody>
        </table>
      </div>
    </section>
  )
}

// ---------- Captions and callouts ----------

const Caption = ({ children, className }: { children: ReactNode; className: string }) => (
  <p className={`flex h-[74px] items-center justify-center whitespace-pre bg-[#dc0530] font-['Liberation_Serif','Noto_Serif_CJK_JP','Noto_Sans_CJK_JP',serif] text-[35px] font-bold text-white [font-feature-settings:normal] ${className}`}>
    {children}
  </p>
)

const Frame = ({ className }: { className: string }) => (
  <div className={`pointer-events-none absolute rounded-md border-[10px] border-[#dc0530] ${className}`} />
)

function Callouts() {
  return (
    <>
      <svg className="pointer-events-none absolute inset-0 h-full w-full" aria-hidden="true">
        <path d="M10 822H538L848 930H10z" fill="#dc0530" fillOpacity=".3" />
        <path d="M617 302L622 278H632L628 302z" fill="#fff" />
        <g fill="#dc0530" stroke="#fff" strokeWidth="10" paintOrder="stroke">
          <path d="M625 288C645 225 690 190 775 198L782 184L817 230L756 246L762 229C700 222 655 235 625 288z" />
          <path d="M660 730C710 795 770 825 858 799L853 783L903 797L872 847L867 831C770 862 710 825 660 730z" />
        </g>
      </svg>
      <Frame className="left-[597px] top-[299px] h-[59px] w-[63px]" />
      <Frame className="left-[597px] top-[391px] h-[435px] w-[63px]" />
      <Frame className="left-[5px] top-[736px] h-[88px] w-[535px]" />
    </>
  )
}

export default function App() {
  return (
    <main className="relative flex min-h-screen bg-white font-['Noto_Sans_CJK_JP',sans-serif] text-black [font-feature-settings:'palt']">
      <Gradients />
      <div className="w-[799px] shrink-0 pl-[3px] pt-[127px]">
        <CardWindow />
        <div className="ml-0.5 mt-14 grid h-[126px] w-[851px] grid-cols-[repeat(4,167px)_auto] content-center gap-y-[25px] rounded-md border-[9px] border-[#dc0530] bg-[#fffae2] pb-1 pl-[21px]">
          {marks.map(mark => <MarkCheck key={mark} label={mark} large />)}
        </div>
        <Caption className="ml-[7px] mt-4 w-[287px]">マークで抽出</Caption>
      </div>
      <div className="flex-1 pt-[3px]">
        <ExtractDialog />
        <Caption className="relative -mt-[54px] ml-[68px] mr-[73px]">分類  /  マークで抽出</Caption>
        <div className="mt-[75px]">
          <FilterWindow />
          <Caption className="relative ml-12 mr-[43px]">イニシャル  /  分類で抽出</Caption>
        </div>
      </div>
      <Callouts />
    </main>
  )
}
